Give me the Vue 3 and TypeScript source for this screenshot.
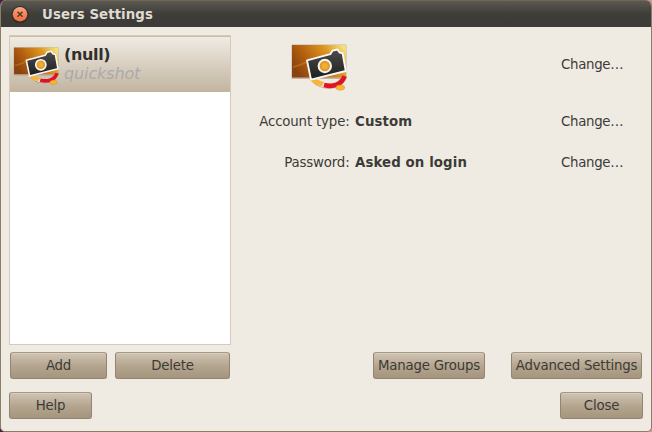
<script setup lang="ts">
interface Field {
  label: string
  value: string
}

const fields: Field[] = [
  { label: 'Account type:', value: 'Custom' },
  { label: 'Password:', value: 'Asked on login' },
]
</script>

<template>
  <div class="desktop">
    <div class="window">
      <header class="titlebar">
        <svg class="close-icon" viewBox="0 0 18 18">
          <defs>
            <linearGradient id="orb" x1="0" y1="0" x2="0" y2="1">
              <stop offset="0" stop-color="#f8ab88" />
              <stop offset=".5" stop-color="#f3855a" />
              <stop offset="1" stop-color="#f0703c" />
            </linearGradient>
          </defs>
          <circle cx="9" cy="8.6" r="8.6" fill="#2f2e2a" />
          <circle cx="9" cy="8.2" r="7.3" fill="url(#orb)" />
          <path d="M6.5 5.7l5 5M11.5 5.7l-5 5" stroke="#583a2d" stroke-width="1.5" />
        </svg>
        <span class="title">Users Settings</span>
      </header>

      <svg class="defs" width="0" height="0">
        <defs>
          <linearGradient id="photo" x1="0" y1=".6" x2="1" y2=".2">
            <stop offset="0" stop-color="#8a420f" />
            <stop offset=".3" stop-color="#b4600f" />
            <stop offset=".7" stop-color="#dc9722" />
            <stop offset="1" stop-color="#f3df79" />
          </linearGradient>
          <linearGradient id="body" x1="0" y1="0" x2="0" y2="1">
            <stop offset="0" stop-color="#4c4c4c" />
            <stop offset="1" stop-color="#1d1d1d" />
          </linearGradient>
          <symbol id="quickshot" viewBox="0 0 57 49">
            <rect x=".5" y="1.5" width="55" height="34.5" rx="1" fill="#a4917b" opacity=".6" />
            <rect x="1" y="2" width="54" height="32.5" fill="url(#photo)" />
            <path d="M2 24C8 23 13 20 18 18" fill="none" stroke="#e09a32" stroke-width="2" opacity=".35" />
            <path d="M22 36C28 44.5 48 47.5 53.6 33" fill="none" stroke="#a8322a" stroke-width="5" opacity=".45" />
            <path d="M22 35.5C28 44 48 47 53.5 33" fill="none" stroke="#f1ede4" stroke-width="4.4" />
            <path d="M33 42C42 44.4 51 41.5 53.5 33" fill="none" stroke="#dd1523" stroke-width="4.6" />
            <path d="M17.8 36.2L25.5 36.2 33 39.3 31 43 25.5 42.4Z" fill="#f3b53c" />
            <ellipse cx="49.3" cy="44.6" rx="4.3" ry="2.5" fill="#f9b62f" stroke="#d28b2c" stroke-width=".6" />
            <path
              d="M16 17.4L39.3 11.2 41.6 7.6 46.5 6.5 48.6 9.5 51.6 10.3 54.8 28 20 36.7Z"
              fill="url(#body)" stroke="#faf9f5" stroke-width="1.9" stroke-linejoin="round"
            />
            <circle cx="33.8" cy="23" r="6.2" fill="#e39b27" stroke="#f7f6f2" stroke-width="2" />
            <circle cx="33.8" cy="23" r="3" fill="#eeae3a" />
          </symbol>
        </defs>
      </svg>

      <main class="content">
        <section class="columns">
          <div class="users">
            <div class="list">
              <div class="row">
                <svg class="avatar small"><use href="#quickshot" /></svg>
                <div class="who">
                  <strong>(null)</strong>
                  <em>quickshot</em>
                </div>
              </div>
            </div>
            <div class="user-actions">
              <button class="btn add">Add</button>
              <button class="btn delete">Delete</button>
            </div>
          </div>

          <div class="details">
            <div class="portrait">
              <svg class="avatar large"><use href="#quickshot" /></svg>
              <span class="change">Change…</span>
            </div>
            <div v-for="field in fields" :key="field.label" class="field">
              <span class="label">{{ field.label }}</span>
              <strong class="value">{{ field.value }}</strong>
              <span class="change">Change…</span>
            </div>
            <div class="detail-actions">
              <button class="btn groups">Manage Groups</button>
              <button class="btn advanced">Advanced Settings</button>
            </div>
          </div>
        </section>

        <footer class="footer">
          <button class="btn dialog">Help</button>
          <button class="btn dialog">Close</button>
        </footer>
      </main>
    </div>
  </div>
</template>

<style>
body {
  margin: 0;
}
</style>

<style scoped>
.desktop {
  width: 652px;
  height: 432px;
  background: linear-gradient(90deg, #42203b 50%, #d9909c 50%);
  font: 13.33px/16px "DejaVu Sans", sans-serif;
  letter-spacing: -0.2px;
  color: #3c3b37;
}
.window {
  box-sizing: border-box;
  width: 652px;
  height: 432px;
  border: 1px solid #8c7d66;
  border-top: 0;
  border-radius: 6px 6px 5px 5px;
  background: #efebe3;
  overflow: hidden;
  display: flex;
  flex-direction: column;
}
.titlebar {
  box-sizing: border-box;
  height: 27px;
  padding: 1px 0 0 10px;
  display: flex;
  align-items: center;
  gap: 13px;
  border-top: 1px solid #74664f;
  background: linear-gradient(#5b5953, #3e3d38 50%, #3c3b37);
}
.close-icon {
  width: 18px;
  height: 18px;
}
.title {
  font-weight: bold;
  letter-spacing: 0.08px;
  color: #dfdbd2;
  white-space: nowrap;
}
.defs {
  position: absolute;
}
.content {
  flex: 1;
  padding: 8px 8px 12px;
  display: flex;
  flex-direction: column;
  justify-content: space-between;
}
.columns {
  display: flex;
}
.users {
  width: 222px;
}
.list {
  box-sizing: border-box;
  height: 310px;
  border: 1px solid #d4cab5;
  background: #fff;
}
.row {
  box-sizing: border-box;
  height: 56px;
  padding: 9px 0 0 3px;
  border-top: 1px solid #c9bba4;
  border-bottom: 1px solid #c3b5a1;
  background: linear-gradient(#efebe3, #c3b5a1);
  display: flex;
  gap: 4px;
}
.avatar {
  display: block;
}
.small {
  width: 47px;
  height: 40px;
}
.large {
  width: 57px;
  height: 49px;
}
.who {
  display: flex;
  flex-direction: column;
  font-size: 16px;
  line-height: 19px;
  margin-top: -1px;
}
.who strong {
  color: #302f2d;
  letter-spacing: -0.35px;
}
.who em {
  color: #aaaaaa;
  letter-spacing: -0.12px;
}
.user-actions {
  display: flex;
  gap: 8px;
  padding: 7px 0 0 1px;
}
.btn {
  box-sizing: border-box;
  height: 27px;
  padding: 0;
  border: 1px solid #948571;
  border-top-color: #a69986;
  border-radius: 3px;
  background: linear-gradient(#d0c4b3, #b4a58f 52%, #a5957e);
  box-shadow: inset 0 1px rgba(255, 255, 255, .15);
  color: #3c3b37;
  font: inherit;
  letter-spacing: inherit;
  white-space: nowrap;
}
.add {
  width: 97px;
}
.delete {
  width: 115px;
}
.details {
  flex: 1;
  display: flex;
  flex-direction: column;
}
.portrait {
  height: 57px;
  padding: 8px 20px 0 60px;
  box-sizing: border-box;
  display: flex;
  justify-content: space-between;
}
.portrait .change {
  margin-top: 14px;
}
.change {
  width: 62px;
  letter-spacing: -0.3px;
}
.field {
  display: grid;
  grid-template-columns: 118.5px 1fr auto;
  column-gap: 5.5px;
  align-items: center;
  height: 41px;
  padding: 0 20px 0 0;
}
.value {
  letter-spacing: 0.1px;
}
.label {
  text-align: right;
  letter-spacing: -0.16px;
}
.portrait + .field {
  margin-top: 9px;
}
.detail-actions {
  margin-top: auto;
  display: flex;
  justify-content: flex-end;
  gap: 26px;
  padding-right: 1px;
}
.groups {
  width: 112px;
}
.advanced {
  width: 131px;
}
.footer {
  display: flex;
  justify-content: space-between;
}
.dialog {
  width: 83px;
}
</style>
